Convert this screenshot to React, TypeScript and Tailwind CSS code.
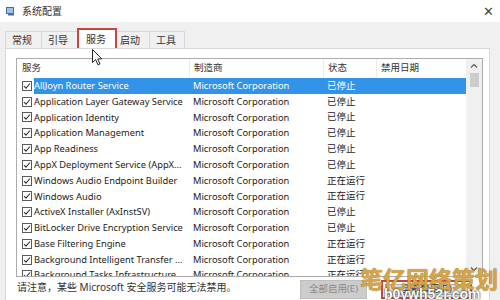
import React from 'react';

const rows: [string, string][] = [
  ['AllJoyn Router Service', '已停止'],
  ['Application Layer Gateway Service', '已停止'],
  ['Application Identity', '已停止'],
  ['Application Management', '已停止'],
  ['App Readiness', '已停止'],
  ['AppX Deployment Service (AppX...', '已停止'],
  ['Windows Audio Endpoint Builder', '正在运行'],
  ['Windows Audio', '正在运行'],
  ['ActiveX Installer (AxInstSV)', '已停止'],
  ['BitLocker Drive Encryption Service', '已停止'],
  ['Base Filtering Engine', '正在运行'],
  ['Background Intelligent Transfer ...', '正在运行'],
  ['Background Tasks Infrastructure ...', '正在运行'],
];

const font = { fontFamily: '"Noto Sans", "Noto Sans CJK SC", sans-serif' };

function Check() {
  return (
    <span className="w-[10px] h-[10px] border border-[#5a5a5a] bg-white flex items-center justify-center shrink-0">
      <svg width="8" height="8" viewBox="0 0 8 8">
        <path d="M1 4.2 L3 6.2 L7 1.5" fill="none" stroke="#333" strokeWidth="1.1" />
      </svg>
    </span>
  );
}

export default function App() {
  return (
    <div
      className="w-[500px] h-[300px] overflow-hidden bg-[#f0f0f0] flex flex-col relative text-[#1b1b1b]"
      style={font}
    >
      {/* 标题栏 */}
      <div className="h-[22px] bg-white flex items-center pl-[6px] pr-[6px] shrink-0">
        <svg width="9" height="9" viewBox="0 0 9 9" className="mr-[7px]">
          <rect x="0.5" y="0.5" width="7" height="6" fill="#9ec3e6" stroke="#4a6f96" />
          <rect x="2" y="7" width="6" height="1.5" fill="#4a6f96" />
        </svg>
        <span className="text-[10px] text-[#333]">系统配置</span>
        <span className="ml-auto text-[13px] leading-none text-[#444] font-light">✕</span>
      </div>

      {/* 选项卡 */}
      <div className="h-[26px] flex items-end pl-[5px] shrink-0 text-[10px] text-[#333]">
        <div className="h-[17px] w-[37px] border border-b-0 border-[#d9d9d9] flex items-center pl-[6px]">常规</div>
        <div className="h-[17px] w-[36px] border border-l-0 border-b-0 border-[#d9d9d9] flex items-center pl-[6px]">引导</div>
        <div className="h-[20px] w-[40px] -ml-px bg-white border-2 border-b-0 border-[#c8453f] flex items-center pl-[7px] relative z-10">服务</div>
        <div className="h-[17px] w-[33px] border border-l-0 border-b-0 border-[#d9d9d9] flex items-center pl-[3px]">启动</div>
        <div className="h-[17px] w-[35px] border border-l-0 border-b-0 border-[#d9d9d9] flex items-center pl-[6px]">工具</div>
      </div>

      {/* 选项卡内容 */}
      <div className="flex-1 ml-[5px] mr-[10px] bg-white border border-[#d9d9d9] border-b-0 pl-[10px] pt-[9px] flex flex-col min-h-0">
        <div className="w-[467px] h-[219px] border border-[#acacac] flex shrink-0 overflow-hidden">
          <div className="flex-1 flex flex-col min-w-0">
            <div className="h-[19px] flex items-center text-[9.5px] text-[#333] shrink-0">
              <div className="w-[173px] pl-[5px] h-full flex items-center border-r border-[#ececec]">服务</div>
              <div className="w-[134px] pl-[4px] h-full flex items-center border-r border-[#ececec]">制造商</div>
              <div className="w-[53px] pl-[4px] h-full flex items-center border-r border-[#ececec]">状态</div>
              <div className="flex-1 pl-[4px] h-full flex items-center">禁用日期</div>
            </div>
            {rows.map(([name, state], i) => (
              <div key={i} className="h-[15.8px] flex items-center text-[9.3px] shrink-0 whitespace-nowrap">
                <div className="pl-[5px] pr-[2px] flex items-center">
                  <Check />
                </div>
                <div
                  className={`flex-1 h-full flex items-center ${i === 0 ? 'bg-[#3393e8] text-white' : ''}`}
                >
                  <div className="w-[159px] overflow-hidden">{name}</div>
                  <div className="w-[134px]">Microsoft Corporation</div>
                  <div className="w-[53px] text-[9.5px]">{state}</div>
                </div>
              </div>
            ))}
          </div>
          {/* 滚动条 */}
          <div className="w-[16px] bg-[#f0f0f0] flex flex-col items-center shrink-0">
            <svg width="8" height="6" viewBox="0 0 8 6" className="mt-[4px]">
              <path d="M1 4.5 L4 1.5 L7 4.5" fill="none" stroke="#555" strokeWidth="1.1" />
            </svg>
            <div className="w-[9px] h-[14px] bg-[#cdcdcd] mt-[4px]" />
            <svg width="8" height="6" viewBox="0 0 8 6" className="mt-auto mb-[4px]">
              <path d="M1 1.5 L4 4.5 L7 1.5" fill="none" stroke="#555" strokeWidth="1.1" />
            </svg>
          </div>
        </div>
        <div className="flex items-start mt-[3px] text-[10px] text-[#333]">
          <span className="pl-[1px]">请注意，某些 Microsoft 安全服务可能无法禁用。</span>
          <div className="ml-auto mr-[17px] flex gap-[14px]">
            <div className="w-[67px] h-[19px] bg-[#cccccc] border border-[#bfbfbf] text-[#8a8a8a] text-[9.5px] flex items-center justify-center">
              全部启用(E)
            </div>
            <div className="w-[91px] h-[19px] border-2 border-[#c8453f] p-[2px]">
              <div className="w-full h-full bg-[#e1e1e1] border border-[#adadad] text-[9.5px] flex items-center justify-center">
                全部禁用(D)
              </div>
            </div>
          </div>
        </div>
      </div>

      {/* 鼠标指针 */}
      <svg width="11" height="17" viewBox="0 0 11 17" className="absolute left-[92px] top-[49px] z-20">
        <path d="M0.5 0.5 L0.5 13.5 L3.6 10.6 L6 15.8 L8 14.9 L5.7 9.9 L9.8 9.9 Z" fill="white" stroke="#222" strokeWidth="1" />
      </svg>

      {/* 水印 */}
      <div className="absolute left-[360px] top-[267px] z-30 flex flex-col items-start">
        <span
          className="text-[23px] font-bold leading-none text-[#d7a548]"
          style={{ fontFamily: '"Noto Sans CJK SC", sans-serif', textShadow: '0 0 1px #7a5a20' }}
        >
          笔亿网络策划
        </span>
        <span
          className="text-[14px] font-bold leading-none text-white ml-[24px] -mt-[3px]"
          style={{ fontFamily: '"Liberation Sans", sans-serif', textShadow: '0 0 2px #333, 0 0 1px #333' }}
        >
          b0ywh52r.com
        </span>
      </div>
    </div>
  );
}
